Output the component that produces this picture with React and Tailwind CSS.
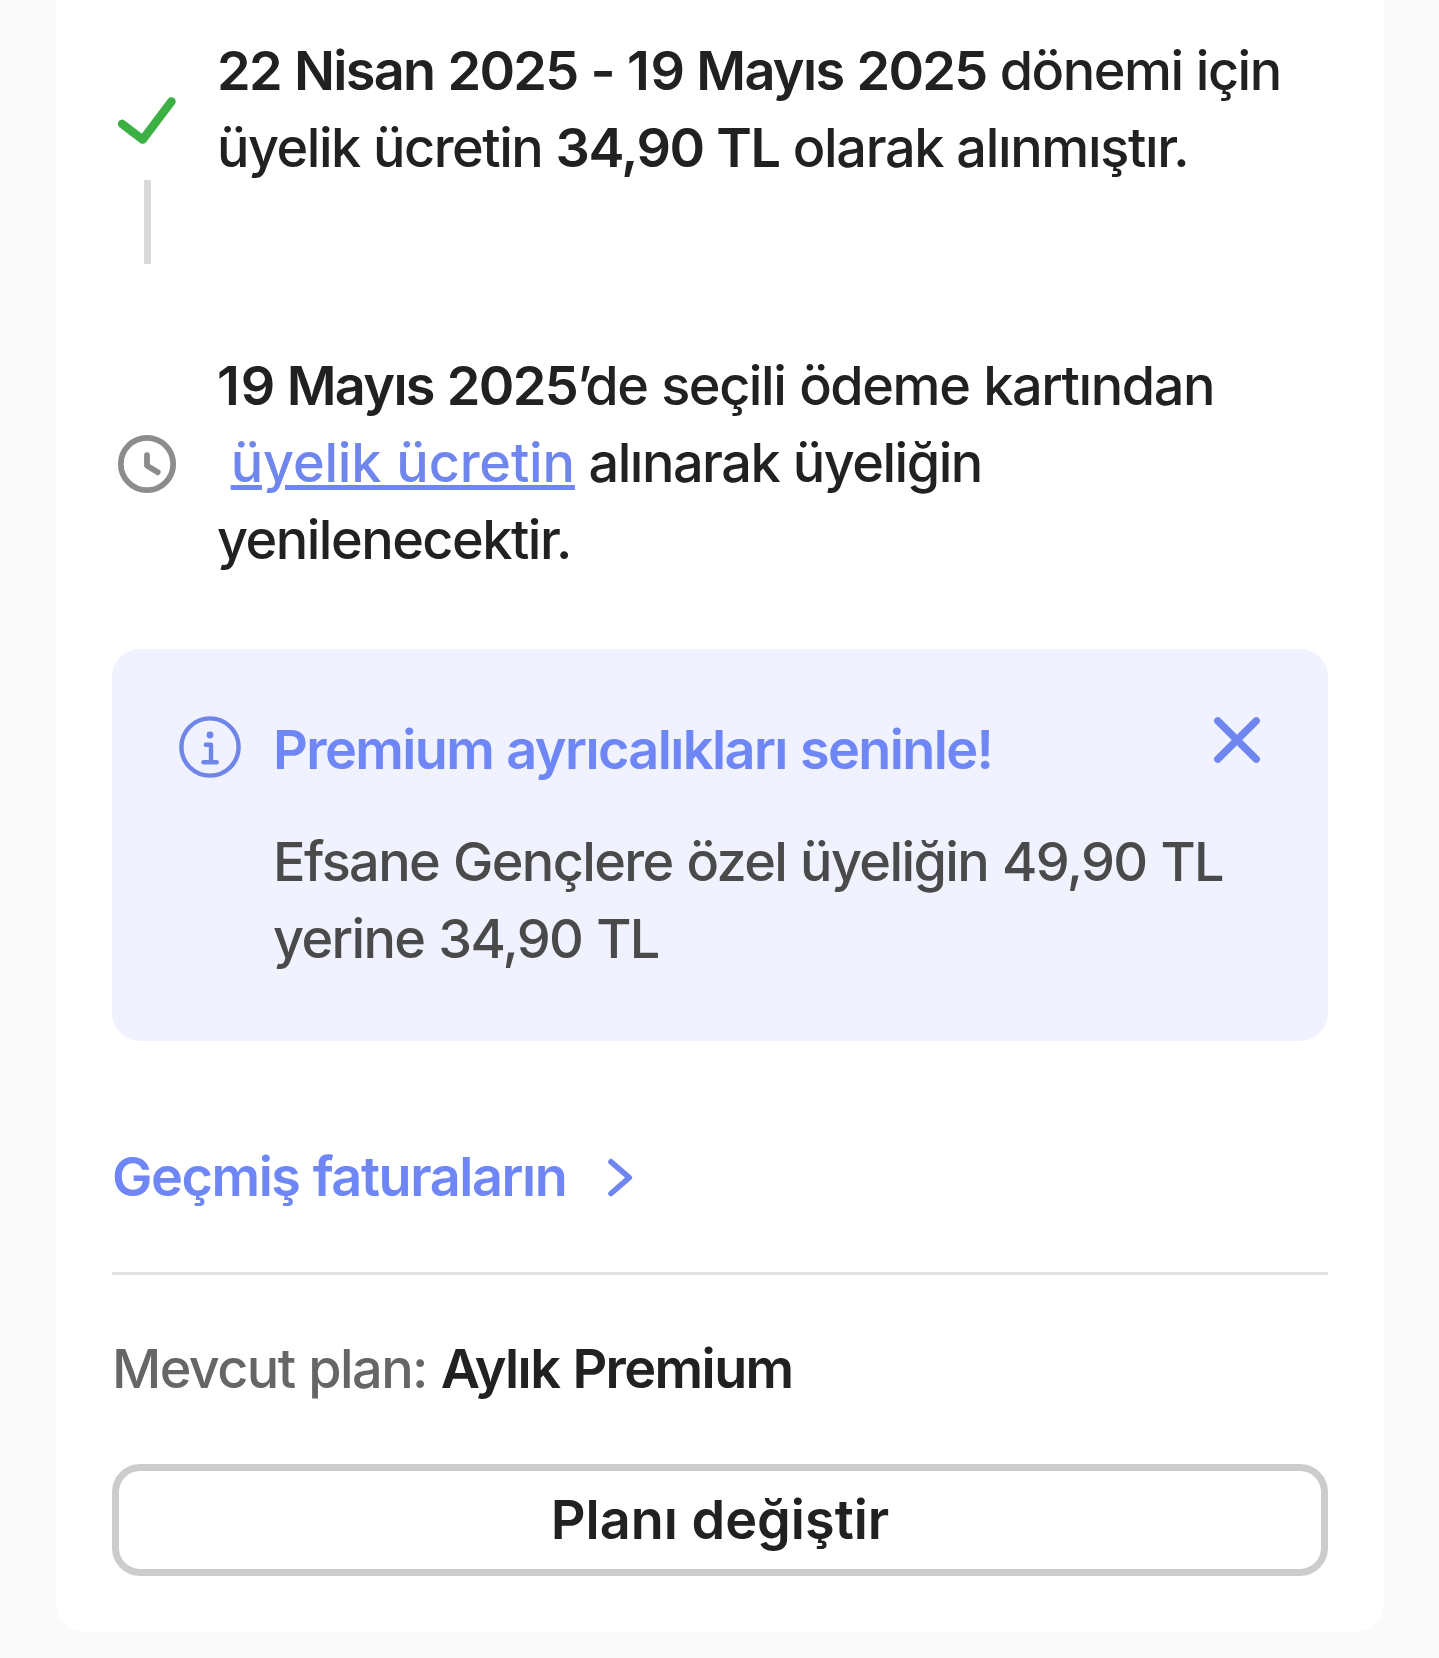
const CheckIcon = () => (
  <svg className="size-[70px]" viewBox="0 0 70 70" fill="none" stroke="#3bb143" strokeWidth="8.4" strokeLinecap="round" strokeLinejoin="round">
    <path d="M10 38.8 L30.7 54.6 L59.5 16.4" />
  </svg>
);

const ClockIcon = () => (
  <svg className="size-[70px]" viewBox="0 0 70 70" fill="none" stroke="#8c8c8c" strokeWidth="5.8" strokeLinecap="round" strokeLinejoin="round">
    <circle cx="35" cy="35" r="26.2" />
    <path d="M35 26.2 V36.6 L45.7 43.3" />
  </svg>
);

const InfoIcon = () => (
  <svg className="size-[70px] shrink-0" viewBox="0 0 70 70" fill="none" stroke="#6f86e8" strokeWidth="4.4" strokeLinecap="round" strokeLinejoin="round">
    <circle cx="35" cy="35" r="28.6" />
    <circle cx="35" cy="23" r="3.4" fill="#6f86e8" stroke="none" />
    <path d="M30.8 32.8 H36 V50.3 M28.5 50.3 H41.7" />
  </svg>
);

const CloseIcon = () => (
  <svg className="size-14" viewBox="0 0 56 56" fill="none" stroke="#6f86ee" strokeWidth="7.4" strokeLinecap="round">
    <path d="M8.8 8.8 L47.2 47.2 M47.2 8.8 L8.8 47.2" />
  </svg>
);

const ChevronIcon = () => (
  <svg className="h-[42px] w-7" viewBox="0 0 28 42" fill="none" stroke="#6f86ee" strokeWidth="5.6" strokeLinecap="round" strokeLinejoin="round">
    <path d="M5 5.8 L23.3 21.7 L5 37.5" />
  </svg>
);

const Bold = ({ children }) => (
  <strong className="font-semibold tracking-[-1.68px] [word-spacing:1.1px]">{children}</strong>
);

export default function App() {
  return (
    <div className="h-[1658px] w-[1439px] bg-[#fafafa] pl-14 font-['Inter',sans-serif] text-[54px] leading-[77px] font-medium tracking-[-1.6px] text-[#212121] [word-spacing:1.1px]">
      <main className="flex h-[1632px] w-[1328px] flex-col rounded-b-[28px] bg-white px-14 pt-8">
        {/* Membership timeline */}
        <section className="flex h-[315px] gap-[35px]">
          <div className="flex w-[70px] flex-col items-center pt-[53px]">
            <CheckIcon />
            <div className="mt-[25px] h-[84px] w-[7px] bg-[#d9d9d9]" />
          </div>
          <p className="flex-1 whitespace-nowrap tracking-[-1.47px] [word-spacing:0.2px]">
            <Bold>22 Nisan 2025 - <span className="tracking-[0.5px]">1</span>9 Mayıs 2025</Bold> dönemi için
            <br />
            üyelik ücretin <strong className="font-semibold tracking-[-1.4px]">34,90 TL</strong>
            <span className="tracking-[-1.35px]"> olarak alınmıştır.</span>
          </p>
        </section>
        <section className="flex gap-[35px]">
          <div className="w-[70px] pt-[82px]">
            <ClockIcon />
          </div>
          <p className="flex-1 whitespace-nowrap tracking-[-1.5px] [word-spacing:0.8px]">
            <Bold><span className="tracking-[1px]">1</span>9 Mayıs 2025</Bold><span className="tracking-[-6.8px]">’</span><span className="tracking-[-1.43px]">de seçili ödeme kartından</span>
            <br />
            &nbsp;<a href="#" className="tracking-[-0.17px] text-[#6f86ee] underline decoration-[5px] underline-offset-[3px]">üyelik ücretin</a> alınarak üyeliğin
            <br />
            yenilenecektir.
          </p>
        </section>

        {/* Premium info box */}
        <section className="mt-[71px] flex h-[392px] gap-7 rounded-[28px] bg-[#f0f2ff] p-[63px]">
          <InfoIcon />
          <div className="-mt-px flex-1 whitespace-nowrap">
            <div className="flex items-start justify-between">
              <h2 className="font-semibold tracking-[-1.6px] text-[#6e86f6]">Premium ayrıcalıkları seninle!</h2>
              <button className="pt-px">
                <CloseIcon />
              </button>
            </div>
            <p className="mt-[35px] tracking-[-1.63px] text-[#4a4a4a]">
              Efsane Gençlere özel üyeliğin 49,90 TL
              <br />
              yerine 34,90 TL
            </p>
          </div>
        </section>

        <a href="#" className="mt-[97px] flex items-center gap-10 font-semibold text-[#6e86f6]">
          <span className="tracking-[-1.45px]">Geçmiş faturaların</span>
          <ChevronIcon />
        </a>
        <hr className="mt-[57px] border-t-[3px] border-[#e3e3e3]" />
        <p className="mt-[55px] text-[#666]">
          Mevcut plan: <strong className="font-semibold text-[#212121]">Aylık Premium</strong>
        </p>
        <button className="mt-[57px] flex h-28 items-center justify-center rounded-[28px] border-[7px] border-[#ccc] pb-0.5 font-semibold tracking-normal">
          Planı değiştir
        </button>
      </main>
    </div>
  );
}
